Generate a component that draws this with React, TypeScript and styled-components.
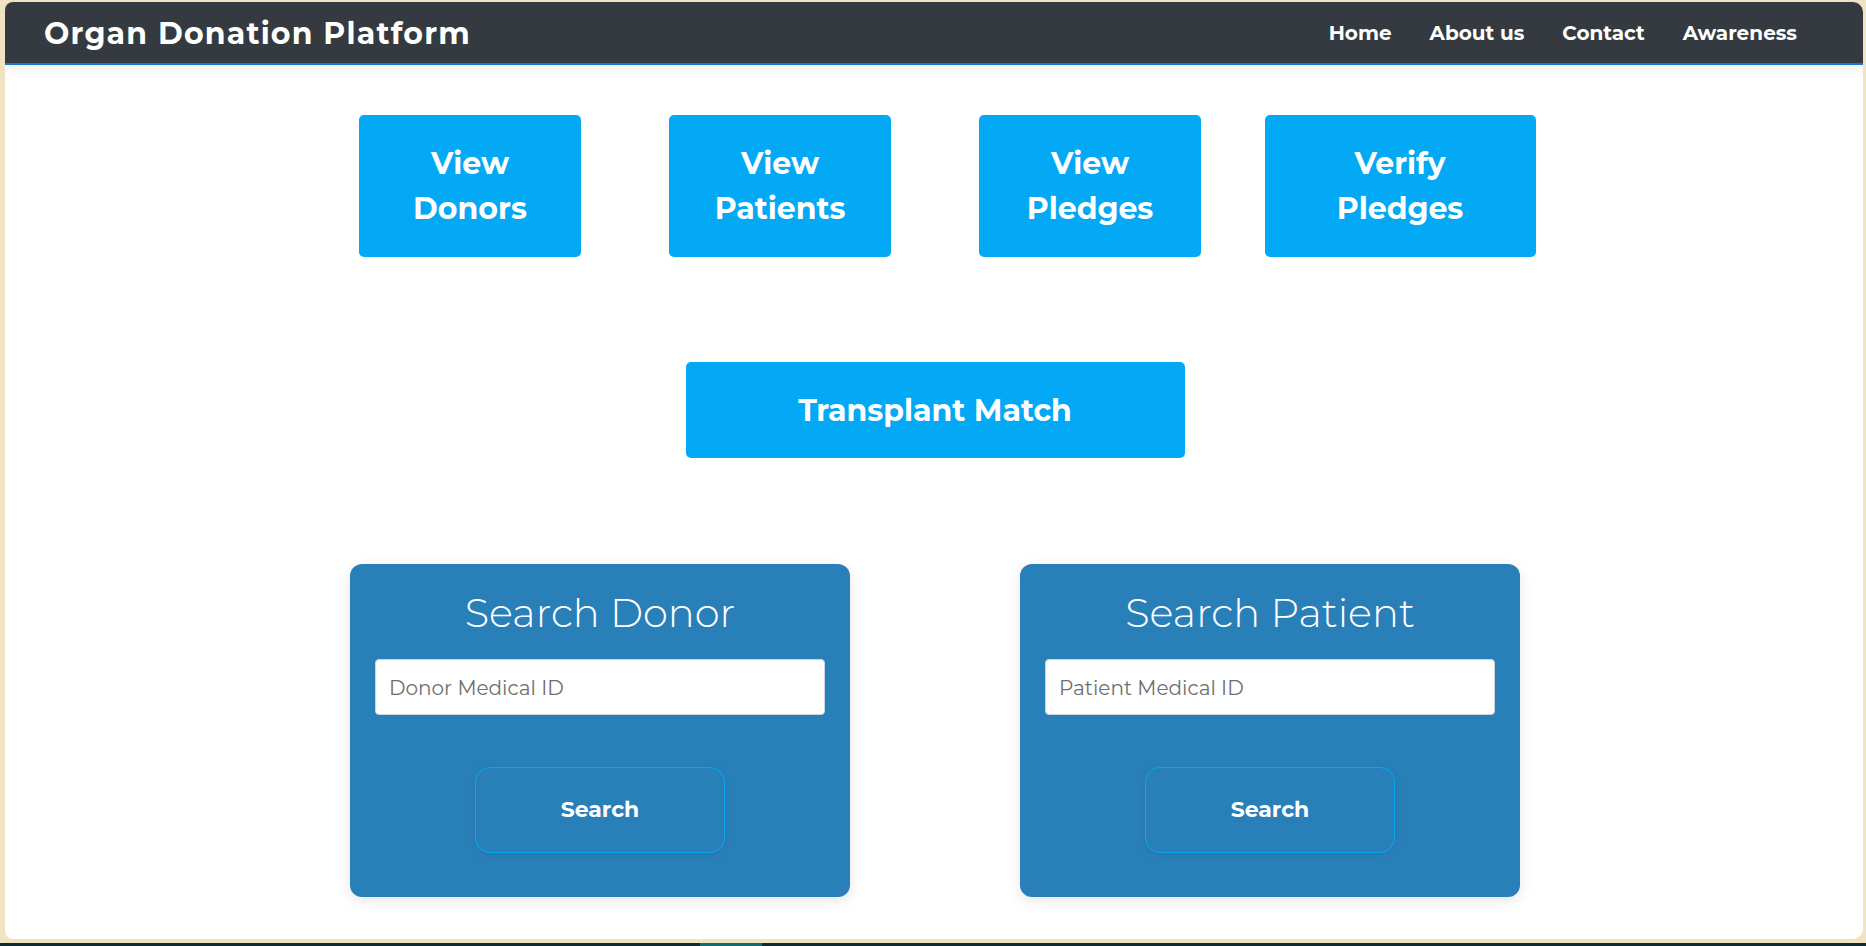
import styled, { createGlobalStyle } from "styled-components";

const GlobalStyle = createGlobalStyle`
  html, body {
    margin: 0;
    padding: 0;
    background: #efe3c1;
  }
  * {
    box-sizing: border-box;
  }
  body {
    font-family: Montserrat, "DejaVu Sans", "Noto Sans", sans-serif;
  }
`;

const Screen = styled.div`
  height: 946px;
  display: flex;
  flex-direction: column;
`;

const Window = styled.div`
  flex: 1;
  margin: 2px 3px 4px 5px;
  background: #ffffff;
  border-radius: 8px 10px 10px 8px;
  overflow: hidden;
  display: flex;
  flex-direction: column;
`;

const Taskbar = styled.div`
  height: 3px;
  background: #0e2a32;
  display: flex;
`;

const TaskItem = styled.div`
  margin-left: 700px;
  width: 62px;
  background: #0f6b70;
`;

const Header = styled.header`
  height: 63px;
  background: #343a40;
  border-bottom: 2px solid #1976d2;
  box-shadow: 0 4px 10px rgba(0, 0, 0, 0.08);
  display: flex;
  align-items: center;
  justify-content: space-between;
  padding: 0 66px 0 39px;
  position: relative;
  z-index: 1;
`;

const Brand = styled.h1`
  margin: 0;
  color: #ffffff;
  font-size: 30px;
  font-weight: 700;
  letter-spacing: 1.2px;
  padding-top: 2px;
`;

const Nav = styled.nav`
  display: flex;
  gap: 38px;
`;

const NavLink = styled.a`
  color: #ffffff;
  font-size: 20px;
  font-weight: 700;
  text-decoration: none;
  cursor: pointer;
`;

const Main = styled.main`
  padding: 50px 0 0 2px;
  display: flex;
  flex-direction: column;
  align-items: center;
`;

const ActionGrid = styled.div`
  display: grid;
  grid-template-columns: repeat(4, 310px);
  justify-content: center;
`;

const ActionButton = styled.button<{ $width: number; $height: number }>`
  justify-self: center;
  width: ${(p) => p.$width}px;
  height: ${(p) => p.$height}px;
  background: #03a9f4;
  color: #ffffff;
  border: none;
  border-radius: 5px;
  font-family: inherit;
  font-size: 30px;
  font-weight: 700;
  line-height: 45px;
  cursor: pointer;
  padding: 0;
`;

const MatchButton = styled(ActionButton)`
  margin-top: 105px;
`;

const SearchRow = styled.div`
  margin-top: 106px;
  display: flex;
  gap: 170px;
`;

const SearchCard = styled.div`
  width: 500px;
  background: #2980b9;
  border-radius: 12px;
  box-shadow: 0 4px 14px rgba(0, 0, 0, 0.1);
  padding: 25px 25px 44px;
  display: flex;
  flex-direction: column;
  align-items: center;
`;

const CardTitle = styled.h2`
  margin: 0;
  color: #ffffff;
  font-size: 40px;
  font-weight: 300;
  line-height: 48px;
`;

const IdInput = styled.input`
  margin-top: 22px;
  width: 100%;
  height: 56px;
  border: 1px solid #ced4da;
  border-radius: 4px;
  padding: 2px 13px 0;
  font-family: inherit;
  font-size: 20px;
  color: #333;
  background: #ffffff;
  &::placeholder {
    color: #6f6f6f;
  }
`;

const SearchButton = styled.button`
  margin-top: 52px;
  width: 250px;
  height: 86px;
  background: transparent;
  border: 1px solid #03a9f4;
  border-radius: 15px;
  box-shadow: 0 2px 8px rgba(0, 0, 0, 0.08);
  color: #ffffff;
  font-family: inherit;
  font-size: 22px;
  font-weight: 700;
  cursor: pointer;
  padding: 0 0 2px;
`;

const navItems = ["Home", "About us", "Contact", "Awareness"];

const actions = [
  { top: "View", bottom: "Donors", width: 222 },
  { top: "View", bottom: "Patients", width: 222 },
  { top: "View", bottom: "Pledges", width: 222 },
  { top: "Verify", bottom: "Pledges", width: 271 },
];

const searches = [
  { title: "Search Donor", placeholder: "Donor Medical ID" },
  { title: "Search Patient", placeholder: "Patient Medical ID" },
];

export default function App() {
  return (
    <Screen>
      <GlobalStyle />
      <Window>
        <Header>
          <Brand>Organ Donation Platform</Brand>
          <Nav>
            {navItems.map((item) => (
              <NavLink key={item}>{item}</NavLink>
            ))}
          </Nav>
        </Header>
        <Main>
          <ActionGrid>
            {actions.map((a) => (
              <ActionButton key={a.top + a.bottom} $width={a.width} $height={142}>
                {a.top}
                <br />
                {a.bottom}
              </ActionButton>
            ))}
          </ActionGrid>
          <MatchButton $width={499} $height={96}>
            Transplant Match
          </MatchButton>
          <SearchRow>
            {searches.map((s) => (
              <SearchCard key={s.title}>
                <CardTitle>{s.title}</CardTitle>
                <IdInput placeholder={s.placeholder} />
                <SearchButton>Search</SearchButton>
              </SearchCard>
            ))}
          </SearchRow>
        </Main>
      </Window>
      <Taskbar>
        <TaskItem />
      </Taskbar>
    </Screen>
  );
}
